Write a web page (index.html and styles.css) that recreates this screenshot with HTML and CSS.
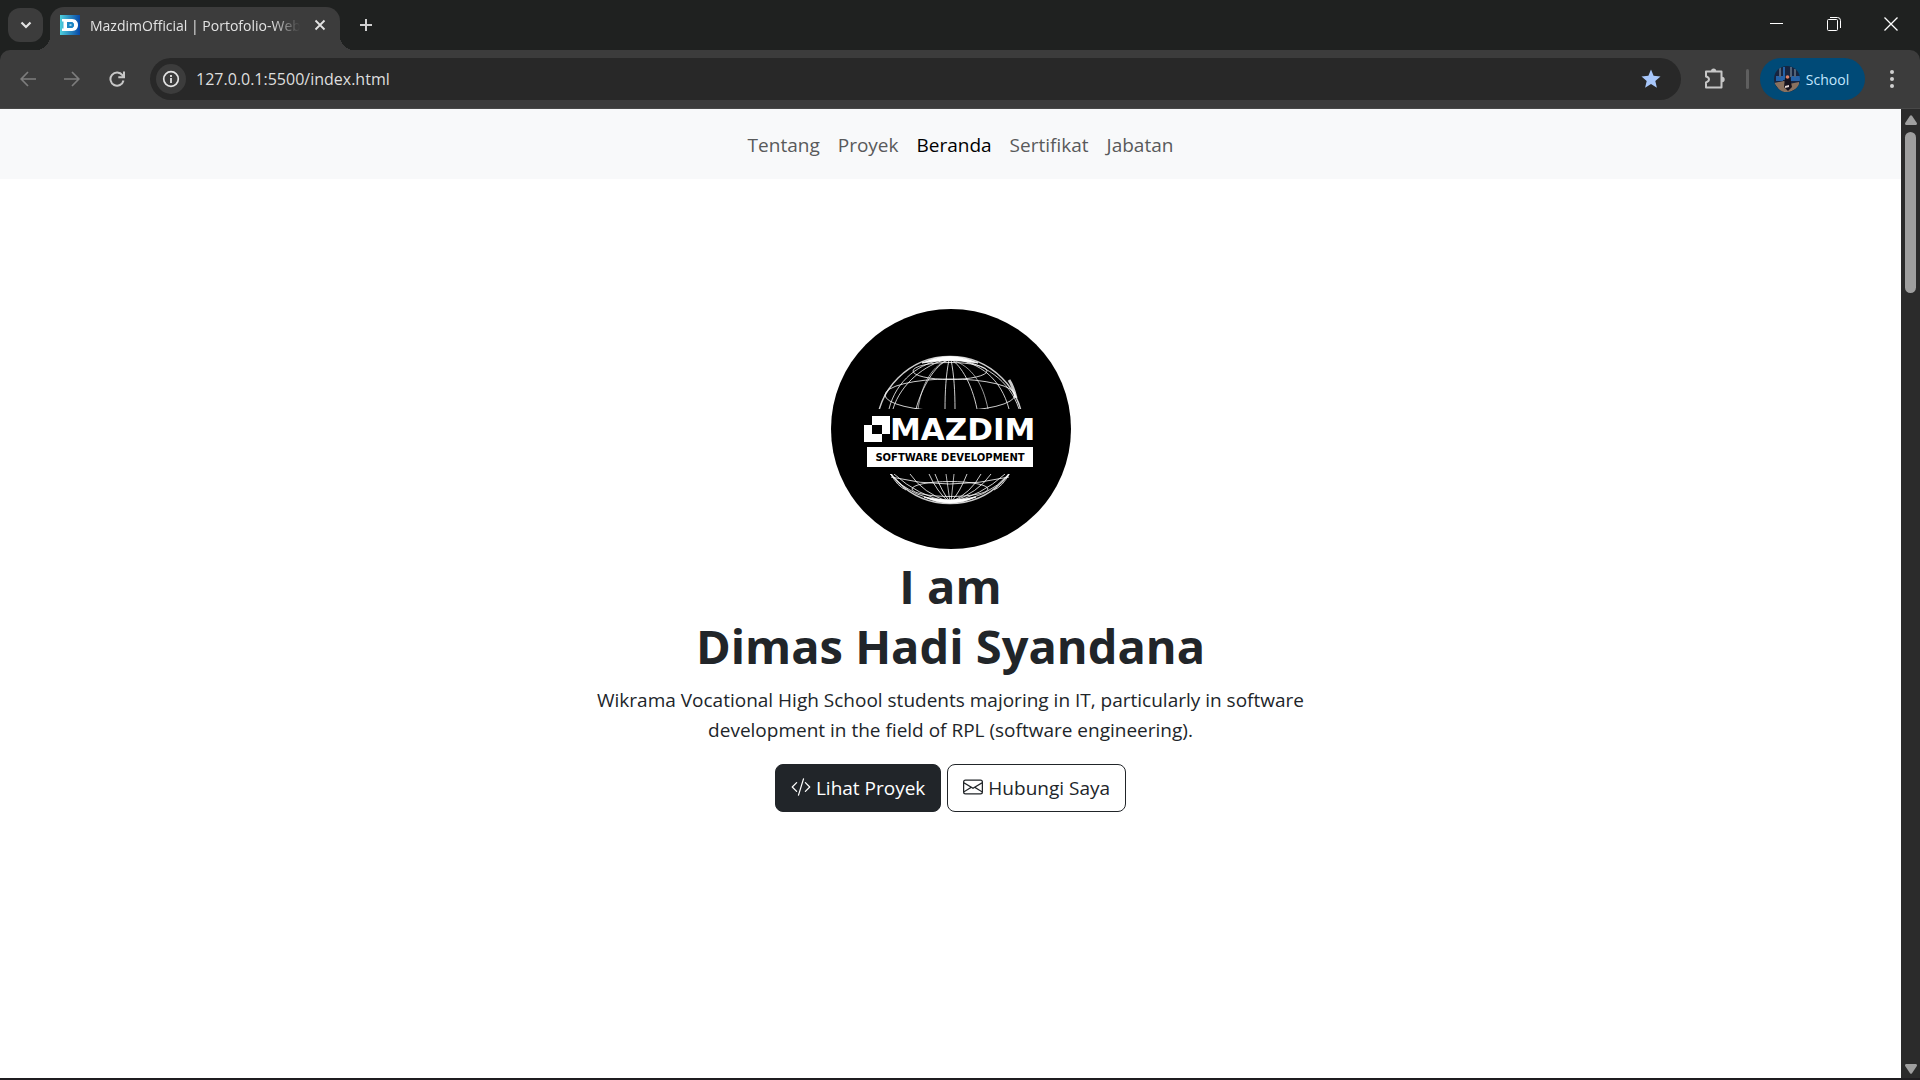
FILE: index.html
```html
<!DOCTYPE html>
<html lang="id">
<head>
<meta charset="utf-8">
<meta name="viewport" content="width=device-width, initial-scale=1">
<title>MazdimOfficial | Portofolio-Web</title>
<link rel="stylesheet" href="styles.css">
</head>
<body>
<div class="window">
  <header class="tabstrip">
    <button class="tab-search" aria-label="Search tabs">
      <svg width="12" height="8" viewBox="0 0 12 8"><path d="M1.500 1.500 6 6l4.500-4.500" fill="none" stroke="#e3e3e3" stroke-width="2.200"/></svg>
    </button>
    <div class="tab">
      <svg class="favicon" width="20" height="20" viewBox="0 0 20 20">
        <defs><linearGradient id="fav"><stop offset="0" stop-color="#4fd0dc"/><stop offset="1" stop-color="#0647a8"/></linearGradient></defs>
        <rect width="20" height="20" fill="url(#fav)"/>
        <path fill="#fff" fill-rule="evenodd" d="M2 4h10c8 0 8 12 0 12H2v-2.500h1.500v-7H2zM7 7v6h4c4 0 4-6 0-6z"/>
        <path fill="#1c86c4" d="M7 7h4c4 0 4 6 0 6H7z"/><path fill="#fff" d="M9.500 9h2v2h-2z" opacity=".6"/>
      </svg>
      <span class="tab-title">MazdimOfficial | Portofolio-Web</span>
      <button class="tab-close" aria-label="Close tab">
        <svg width="12" height="12" viewBox="0 0 12 12"><path d="M1.500 1.500l9 9m0-9l-9 9" stroke="#e3e3e3" stroke-width="1.800"/></svg>
      </button>
    </div>
    <button class="new-tab" aria-label="New tab">
      <svg width="14" height="14" viewBox="0 0 14 14"><path d="M7 1v12M1 7h12" stroke="#d0d0d0" stroke-width="2"/></svg>
    </button>
    <div class="controls">
      <button aria-label="Minimize"><svg width="14" height="14" viewBox="0 0 14 14"><path d="M0 6.500h13" stroke="#fff"/></svg></button>
      <button aria-label="Restore"><svg width="14" height="14" viewBox="0 0 14 14" fill="none" stroke="#fff"><rect x=".5" y="2.500" width="10" height="11" rx="1"/><path d="M3 .5h7.500q3 0 3 3V11"/></svg></button>
      <button aria-label="Close"><svg width="14" height="14" viewBox="0 0 14 14"><path d="M.5.5l13 13m0-13l-13 13" stroke="#fff" stroke-width="1.300"/></svg></button>
    </div>
  </header>

  <div class="toolbar">
    <button class="tool" aria-label="Back"><svg width="16" height="16" viewBox="0 0 16 16" fill="none" stroke="#7d7d7d" stroke-width="1.700"><path d="M16 8H1.500M8 1 1.200 8 8 15"/></svg></button>
    <button class="tool" aria-label="Forward"><svg width="16" height="16" viewBox="0 0 16 16" fill="none" stroke="#7d7d7d" stroke-width="1.700"><path d="M0 8h14.500M8 1l6.800 7L8 15"/></svg></button>
    <button class="tool reload" aria-label="Reload"><svg width="16" height="16" viewBox="0 0 16 16" fill="none" stroke="#c7c7c7" stroke-width="2"><path d="M14.500 9.500A6.600 6.600 0 1 1 13.400 4.200L14.500 5.500M15 .5v5.700H9.300"/></svg></button>
    <div class="omnibox">
      <button class="site-info" aria-label="Site information"><svg width="18" height="18" viewBox="0 0 18 18"><circle cx="9" cy="9" r="7.300" fill="none" stroke="#e3e3e3" stroke-width="1.700"/><path d="M9 8v5M9 5v2" stroke="#e3e3e3" stroke-width="1.800"/></svg></button>
      <input class="url" type="text" aria-label="Address" value="127.0.0.1:5500/index.html">
      <button class="bookmark" aria-label="Bookmark"><svg width="20" height="20" viewBox="0 0 20 20"><path fill="#a8c7fa" d="M10 .5l2.600 6.300 6.900.6-5.200 4.500 1.600 6.800-5.900-3.600-5.900 3.600 1.600-6.800L.5 7.400l6.900-.6z"/></svg></button>
    </div>
    <button class="tool extensions" aria-label="Extensions"><svg width="22" height="22" viewBox="0 0 22 22"><path fill="none" stroke="#c7c7c7" stroke-width="2" stroke-linejoin="round" d="M2 3.500h15.500v16H2v-5c4-1.500 4-5 0-6z"/><path fill="#c7c7c7" d="M7 3a2.600 2.600 0 0 1 5.200 0zM18 8.800a2.700 2.700 0 0 1 0 5.400z"/></svg></button>
    <span class="divider"></span>
    <button class="profile">
      <svg width="26" height="26" viewBox="0 0 26 26"><defs><clipPath id="av"><circle cx="13" cy="13" r="13"/></clipPath></defs><g clip-path="url(#av)"><path fill="#17243f" d="M0 0h26v26H0z"/><path fill="#2462a8" d="M2 10h7v5H2zM17 10h9v5h-9zM9 1h2v13H9z"/><path fill="#536277" d="M5 1h2v10H5zM16 1h2v10h-2zM20 3h2v8h-2z"/><path fill="#89715f" d="M0 17l10-2 5 3 10-2v5l-9 5H7z"/><path fill="#16131e" d="M11 12h5l2 9-4 4-4-4z"/><circle cx="13.500" cy="11" r="1.800" fill="#dc8067"/><path fill="#e2d5d4" d="M11 20l4-1v2l-4 1z"/></g></svg>
      <span>School</span>
    </button>
    <button class="menu" aria-label="Menu"><svg width="6" height="20" viewBox="0 0 6 20" fill="#d0d0d0"><circle cx="3" cy="3" r="2"/><circle cx="3" cy="10" r="2"/><circle cx="3" cy="17" r="2"/></svg></button>
  </div>

  <div class="viewport">
    <div class="page">
      <nav class="navbar">
        <a href="#tentang">Tentang</a>
        <a href="#proyek">Proyek</a>
        <a href="#beranda" class="active">Beranda</a>
        <a href="#sertifikat">Sertifikat</a>
        <a href="#jabatan">Jabatan</a>
      </nav>
      <main class="hero" id="beranda">
        <svg class="logo" width="240" height="240" viewBox="0 0 240 240" role="img" aria-label="Mazdim Software Development">
          <defs><clipPath id="bands"><path d="M0 0h240v100H0zM0 165h240v75H0z"/></clipPath></defs>
          <circle cx="120" cy="120" r="120"/>
          <g clip-path="url(#bands)" fill="none" stroke="#fff" stroke-opacity=".8">
            <circle cx="119" cy="121" r="73.500" stroke-width="1.500"/>
            <path d="M91 54q28-13 56 0q-28-5-56 0z" fill="#fff"/>
            <ellipse cx="119" cy="62" rx="37" ry="8.500"/>
            <ellipse cx="119" cy="86" rx="65" ry="16"/>
            <path d="M116 50C88 53 65 72 58 100M116 50C94 56 70 74 62 100M121 50c28 3 49 20 57 50M121 50c32 3 58 22 67 50"/>
            <path d="M117 51C104 56 91 78 85 100M121 51c9 6 20 24 25 49"/>
            <path d="M117 51C98 58 90 80 87 100M121 51c20 6 31 24 36 49" stroke-opacity=".6"/>
            <path d="M118 51c-3 14-4 32-4 49M120 51c3 14 4 32 4 49"/>
            <path d="M178 71q4 6 7 18" stroke-width="3"/>
            <ellipse cx="119" cy="180" rx="38" ry="7.500"/>
            <path d="M60 168q58 14 118 0M60 165q6 12 15 16M178 165q-6 12-15 16"/>
            <path d="M59 165q22 25 59 28M63 165q24 22 55 28M178 165q-22 25-58 28M174 165q-24 22-54 28"/>
            <path d="M79 165q13 19 39 28M98 165q8 18 20 28M104 165q7 18 15 28M150 165q-10 19-30 28M160 165q-13 19-40 28M136 165q-7 18-16 28"/>
            <path d="M115 165l4 28M123 165l-3 28" stroke-opacity=".7"/>
            <path d="M93 188q26 6 52 0q-26 12-52 0z" fill="#fff"/>
          </g>
          <path fill="#fff" fill-rule="evenodd" d="M41 107h18v18H41zM33 116h18v17H33z"/>
          <text class="logo-name" x="59" y="131">MAZDIM</text>
          <path fill="#fff" d="M36 138h166v20H36z"/>
          <text class="logo-sub" x="119" y="152" text-anchor="middle">SOFTWARE DEVELOPMENT</text>
        </svg>
        <h1>I am<br>Dimas Hadi Syandana</h1>
        <p>Wikrama Vocational High School students majoring in IT, particularly in software development in the field of RPL (software engineering).</p>
        <div class="actions">
          <button class="btn btn-dark"><svg width="20" height="20" viewBox="0 0 16 16" fill="currentColor"><path d="M10.478 1.647a.5.5 0 1 0-.956-.294l-4 13a.5.5 0 0 0 .956.294zM4.854 4.146a.5.5 0 0 1 0 .708L1.707 8l3.147 3.146a.5.5 0 0 1-.708.708l-3.500-3.500a.5.5 0 0 1 0-.708l3.500-3.500a.5.5 0 0 1 .708 0m6.292 0a.5.5 0 0 0 0 .708L14.293 8l-3.147 3.146a.5.5 0 0 0 .708.708l3.500-3.500a.5.5 0 0 0 0-.708l-3.500-3.500a.5.5 0 0 0-.708 0"/></svg>Lihat Proyek</button>
          <button class="btn btn-outline"><svg width="20" height="20" viewBox="0 0 16 16" fill="currentColor"><path d="M0 4a2 2 0 0 1 2-2h12a2 2 0 0 1 2 2v8a2 2 0 0 1-2 2H2a2 2 0 0 1-2-2zm2-1a1 1 0 0 0-1 1v.217l7 4.200 7-4.200V4a1 1 0 0 0-1-1zm13 2.383-4.708 2.825L15 11.105zm-.034 6.876-5.640-3.471L8 9.583l-1.326-.795-5.640 3.470A1 1 0 0 0 2 13h12a1 1 0 0 0 .966-.741M1 11.105l4.708-2.897L1 5.383z"/></svg>Hubungi Saya</button>
        </div>
      </main>
    </div>
    <div class="scrollbar">
      <svg width="12" height="10" viewBox="0 0 12 10"><path d="M5 .8q1-1 2 0l5 7.400q0 1.800-1 1.800H1Q0 10 0 8.200z" fill="#9f9f9f"/></svg>
      <span class="thumb"></span>
      <svg class="down" width="12" height="10" viewBox="0 0 12 10"><path d="M5 9.200q1 1 2 0l5-7.400Q12 0 11 0H1Q0 0 0 1.800z" fill="#9f9f9f"/></svg>
    </div>
  </div>
</div>
</body>
</html>
```

FILE: styles.css
```css
* { box-sizing: border-box; }

body {
  margin: 0;
  font-family: "Open Sans", "Noto Sans", sans-serif;
  color: #212529;
  background: #fff;
}

button {
  display: flex;
  align-items: center;
  justify-content: center;
  padding: 0;
  border: 0;
  background: none;
  font: inherit;
  color: inherit;
}

svg { display: block; flex: none; }

.window {
  display: flex;
  flex-direction: column;
  min-height: 100vh;
  background: #1f2120;
  border-bottom: 2px solid #1f1d20;
}

/* Tab strip */
.tabstrip {
  display: flex;
  align-items: flex-end;
  height: 50px;
  padding-left: 8px;
}

.tab-search {
  width: 35px;
  height: 34px;
  margin: 0 7px 8px 0;
  border-radius: 12px;
  background: #3c3c3c;
}

.tab {
  position: relative;
  display: flex;
  align-items: center;
  width: 290px;
  height: 43px;
  padding: 0 10px;
  padding-bottom: 7px;
  border-radius: 14px 14px 0 0;
  background: #3c3c3c;
}

.tab::before,
.tab::after {
  content: "";
  position: absolute;
  bottom: 0;
  width: 14px;
  height: 14px;
}

.tab::before {
  right: 100%;
  background: radial-gradient(circle at 0 0, transparent 14px, #3c3c3c 14px);
}

.tab::after {
  left: 100%;
  background: radial-gradient(circle at 100% 0, transparent 14px, #3c3c3c 14px);
}

.tab-title {
  flex: 1;
  margin-left: 10px;
  overflow: hidden;
  white-space: nowrap;
  font-size: 14px;
  color: #e3e3e3;
  -webkit-mask-image: linear-gradient(to left, transparent, #000 28px);
  mask-image: linear-gradient(to left, transparent, #000 28px);
}

.tab-close { width: 20px; height: 20px; margin-left: 10px; }

.new-tab { width: 34px; height: 34px; margin: 0 0 8px 9px; }

.controls {
  display: flex;
  align-self: stretch;
  margin-left: auto;
  padding-right: 1px;
}

.controls button { width: 57px; height: 48px; }

/* Toolbar */
.toolbar {
  display: flex;
  align-items: center;
  height: 59px;
  padding: 0 16px 0 6px;
  border-radius: 10px 10px 0 0;
  border-bottom: 1px solid #484848;
  background: #3c3c3c;
}

.tool { width: 44px; height: 42px; }

.reload { width: 46px; }

.omnibox {
  display: flex;
  flex: 1;
  align-items: center;
  height: 42px;
  margin-left: 10px;
  padding: 0 20px 0 6px;
  border-radius: 21px;
  background: #282828;
}

.site-info {
  width: 30px;
  height: 30px;
  border-radius: 50%;
  background: #3c3c3c;
}

.url {
  flex: 1;
  min-width: 0;
  height: 30px;
  margin-left: 10px;
  padding: 0;
  border: 0;
  background: none;
  font: inherit;
  font-size: 16px;
  color: #dedede;
}

.extensions { margin-left: 12px; }

.divider {
  width: 3px;
  height: 20px;
  margin: 0 11px 0 9px;
  border-radius: 2px;
  background: #5f5f5f;
}

.profile {
  gap: 6px;
  width: 105px;
  height: 42px;
  padding-right: 2px;
  border-radius: 21px;
  background: #004a77;
  font-size: 14px;
  color: #c2e7ff;
}

.menu { width: 24px; height: 30px; margin-left: 15px; }

/* Page area */
.viewport { display: flex; flex: 1; }

.page { flex: 1; background: #fff; }

.scrollbar {
  display: flex;
  flex-direction: column;
  align-items: center;
  gap: 7px;
  width: 19px;
  padding: 6px 0 4px;
  background: #2b2b2b;
}

.thumb {
  width: 11px;
  height: 161px;
  border-radius: 6px;
  background: #9f9f9f;
}

.down { margin-top: auto; }

.navbar {
  display: flex;
  align-items: center;
  justify-content: center;
  gap: 18px;
  height: 70px;
  padding: 2px 0 0 20px;
  background: #f8f9fa;
  font-size: 19px;
}

.navbar a { color: #595a5b; text-decoration: none; }

.navbar .active { color: #000; }

.hero {
  display: flex;
  flex-direction: column;
  align-items: center;
  padding: 130px 20px;
  text-align: center;
}

.logo-name { font: bold 31px "DejaVu Sans", sans-serif; fill: #fff; }

.logo-sub { font: bold 10px "DejaVu Sans", sans-serif; fill: #000; }

h1 {
  margin: 7px 0 9px;
  font-size: 47px;
  line-height: 60px;
  font-weight: 700;
}

.hero p {
  max-width: 740px;
  margin: 0 0 19px;
  font-size: 19px;
  line-height: 30px;
}

.actions { display: flex; gap: 6px; }

.btn {
  gap: 5px;
  height: 48px;
  padding: 0 15px;
  border: 1px solid #212529;
  border-radius: 8px;
  font-size: 19px;
}

.btn svg { margin-bottom: 2px; }

.btn-dark { background: #212529; color: #fff; }
```
